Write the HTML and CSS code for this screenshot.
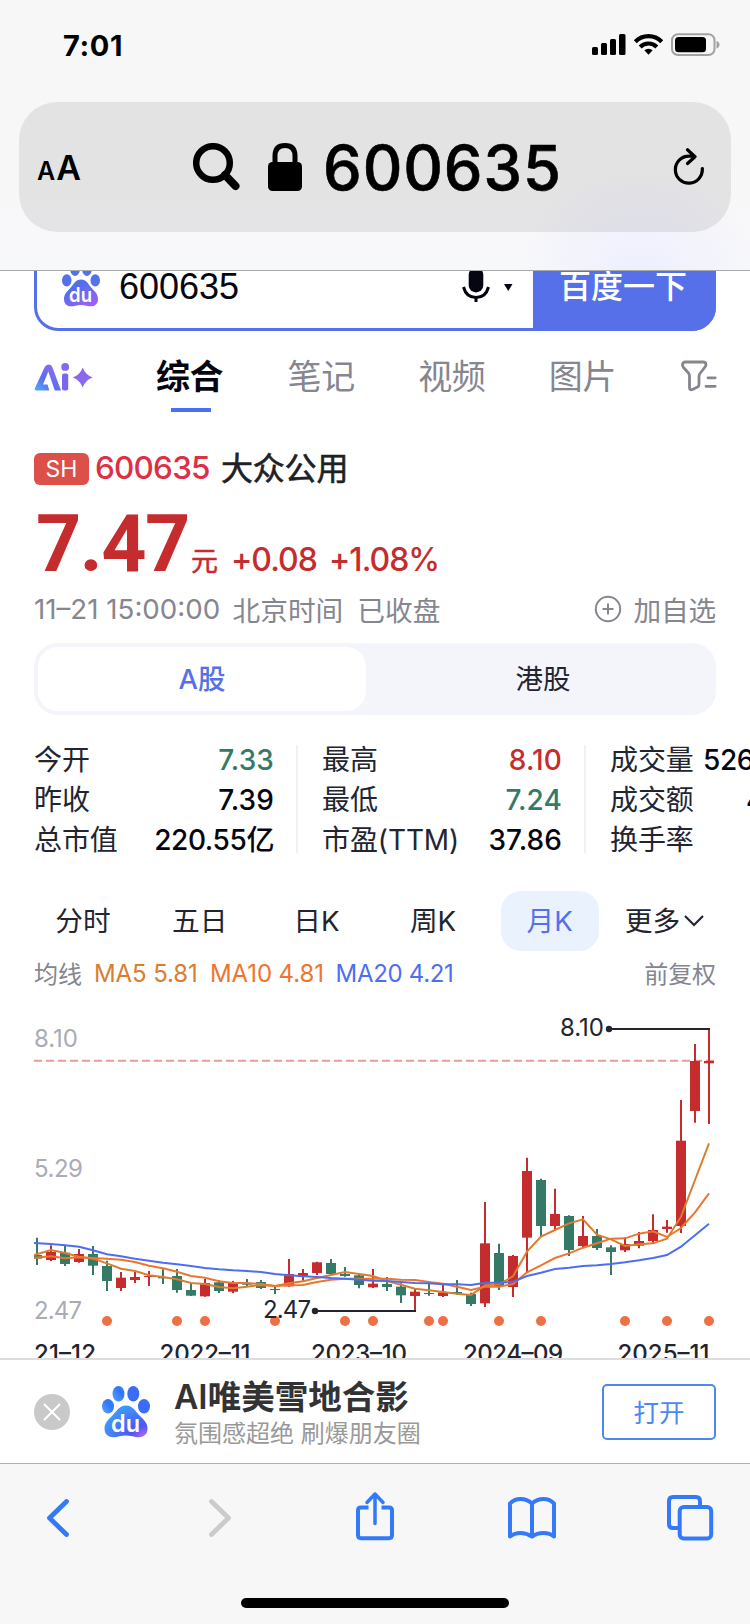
FILE: index.html
```
<!DOCTYPE html>
<html lang="zh-CN">
<head>
<meta charset="utf-8">
<title>600635</title>
<link rel="stylesheet" href="styles.css">
</head>
<body>
<div class="phone">
  <header class="browser-top">
    <div class="status">
      <span class="clock">7:01</span>
      <svg class="status-icons" width="128" height="24" viewBox="0 0 128 24">
        <rect x="0" y="14" width="6" height="8" rx="1.5"/><rect x="9" y="10" width="6" height="12" rx="1.5"/><rect x="18" y="6" width="6" height="16" rx="1.5"/><rect x="27" y="1" width="6.500" height="21" rx="1.5"/>
        <g fill="none" stroke="#000" stroke-width="4.200"><path d="M43.300 8.700a18.500 18.500 0 0 1 26.400 0"/><path d="M48.200 13.900a11.800 11.800 0 0 1 16.600 0"/></g>
        <path d="M52.300 17.300a6.300 6.300 0 0 1 8.400 0L56.500 21.700z"/>
        <rect x="80" y="1.200" width="42.500" height="20.800" rx="6" fill="none" stroke="#a2a2a2" stroke-width="2"/>
        <rect x="83" y="4" width="31" height="15.300" rx="3.500"/><path d="M124.500 8v7.500q3-1 3-3.750T124.500 8z" fill="#a2a2a2"/>
      </svg>
    </div>
    <div class="address">
      <span class="aa"><small>A</small>A</span>
      <div class="address-main">
        <svg width="47" height="48" viewBox="0 0 47 48"><circle cx="20" cy="20" r="16.800" fill="none" stroke="#000" stroke-width="6.500"/><path d="M32 32 42.500 43" stroke="#000" stroke-width="8" stroke-linecap="round"/></svg>
        <svg width="34" height="48" viewBox="0 0 34 48"><rect y="19" width="34" height="29" rx="4.500"/><path d="M7 21V13Q7 2.500 17 2.500T27 13v8" fill="none" stroke="#000" stroke-width="5"/></svg>
        <span>600635</span>
      </div>
      <svg class="reload" width="32" height="38" viewBox="0 0 32 38" fill="none" stroke="#000" stroke-width="3.200" stroke-linecap="round" stroke-linejoin="round"><path d="M29.300 20.500a13.500 13.500 0 1 1-13.300-12.300h5.500M14.500 1.800 22 8.700 14.500 15.500"/></svg>
    </div>
  </header>

  <main class="page">
    <div class="search">
      <svg class="paw" width="38" height="44" viewBox="0 0 48 52" preserveAspectRatio="none">
        <defs><linearGradient id="pw" x1="0" y1="0" x2=".7" y2="1"><stop offset=".35" stop-color="#526eea"/><stop offset="1" stop-color="#9a60f2"/></linearGradient></defs>
        <g fill="#5670ea"><ellipse cx="16.500" cy="7.700" rx="6" ry="7.700"/><ellipse cx="31.500" cy="7.700" rx="6" ry="7.700"/><ellipse cx="6" cy="20.500" rx="6" ry="7.300"/><ellipse cx="42" cy="20.500" rx="6" ry="7.300"/></g>
        <path fill="url(#pw)" d="M24 19.500c7 0 9.500 6 14 10.500 4 4 7.500 7 7.500 12.500 0 6-4 8.700-9 8.700-4 0-7.500-1.700-12.500-1.700S15.500 51.200 11.500 51.200c-5 0-9-2.700-9-8.700C2.500 37 6 34 10 30c4.500-4.500 7-10.500 14-10.500z"/>
        <text class="du" x="9" y="46" textLength="29" lengthAdjust="spacingAndGlyphs">du</text>
      </svg>
      <span class="query">600635</span>
      <svg class="mic" width="52" height="42" viewBox="0 0 52 42"><rect x="6.700" y="6.500" width="14.600" height="25" rx="7.300"/><path d="M1.500 26c1.800 6.800 6.500 10.500 12.500 10.500s10.700-3.700 12.500-10.500M14 37v4" fill="none" stroke="#060612" stroke-width="3"/><path d="M42 23h8.500L46.250 30z"/></svg>
      <span class="go">百度一下</span>
    </div>

    <nav class="tabs">
      <svg width="60" height="30" viewBox="0 0 60 30">
        <defs><linearGradient id="ai" x1="0" y1="1" x2="1" y2="0"><stop offset="0" stop-color="#51aef8"/><stop offset=".4" stop-color="#5a6cf0"/><stop offset="1" stop-color="#a46cf2"/></linearGradient></defs>
        <path fill="url(#ai)" d="M1 25 10.500 4.500Q12 1.500 14.500 1.500q3 0 4 3L27 27.500h-6.200L14.300 8.500 9 21.500h4.500l1.800 6H2.500Q0 27.500 1 25z"/>
        <rect x="28" y="10.500" width="6.200" height="17" rx="2" fill="#7a66ef"/><circle cx="31.200" cy="3.900" r="3.900" fill="#8569f0"/>
        <path fill="#8b69ef" d="M48.700 4.500q2.600 7.400 10 10-7.400 2.600-10 10-2.600-7.400-10-10 7.400-2.600 10-10z"/>
      </svg>
      <span class="tab tab-on">综合</span><span class="tab">笔记</span><span class="tab">视频</span><span class="tab">图片</span>
      <svg class="filter" width="36" height="32" viewBox="0 0 36 32" fill="none" stroke="#85868f" stroke-width="2.800" stroke-linejoin="round" stroke-linecap="round"><path d="M4.500 2H22q3 0 3 2.700 0 1-1 2.300l-5 6.500q-1 1.300-1 3v8q0 1.700-1.500 2.500l-5 2.500q-3 1-3-2V16q0-1.500-.8-2.700L2.500 7.500Q1.500 6 1.500 4.700 1.500 2 4.500 2z"/><path d="M27 17.800h7.200M25 26.300h9.200"/></svg>
    </nav>

    <div class="name"><span class="badge">SH</span><span class="code">600635</span><span class="company">大众公用</span></div>
    <div class="price"><b>7.47</b><span class="yuan">元</span><span class="delta">+0.08</span><span class="pct">+1.08%</span></div>
    <div class="time"><span class="ts">11–21 15:00:00</span><span>北京时间</span><span class="closed">已收盘</span>
      <svg width="28" height="28" viewBox="0 0 28 28" fill="none" stroke="#85868f" stroke-width="2"><circle cx="14" cy="14" r="12.200"/><path d="M8.500 14h11M14 8.500v11"/></svg><span class="add">加自选</span></div>

    <div class="market"><span class="market-on">A股</span><span>港股</span></div>

    <div class="stats">
      <dl><dt>今开</dt><dd class="down wide">7.33</dd><dt>昨收</dt><dd class="wide">7.39</dd><dt>总市值</dt><dd>220.55亿</dd></dl>
      <dl><dt>最高</dt><dd class="up wide">8.10</dd><dt>最低</dt><dd class="down wide">7.24</dd><dt>市盈(TTM)</dt><dd class="wide">37.86</dd></dl>
      <dl class="volume"><dt>成交量</dt><dd>526</dd><dt>成交额</dt><dd class="turnover">4</dd><dt>换手率</dt><dd></dd></dl>
    </div>

    <nav class="periods">
      <span>分时</span><span>五日</span><span>日K</span><span>周K</span><span class="period-on">月K</span>
      <span class="more">更多<svg width="20" height="14" viewBox="0 0 20 14" fill="none" stroke="#222530" stroke-width="2.200"><path d="M1 2l9 9 9-9"/></svg></span>
    </nav>

    <div class="ma"><span class="ma-label">均线</span><span class="ma5">MA5 5.81</span><span class="ma10">MA10 4.81</span><span class="ma20">MA20 4.21</span><span class="adjust">前复权</span></div>

    <svg class="chart" width="750" height="358" viewBox="0 0 750 358">
      <clipPath id="plot"><rect x="34" y="0" width="690" height="358"/></clipPath>
      <g id="candles" clip-path="url(#plot)"></g>
      <g class="scale"><text x="34" y="47" textLength="44">8.10</text><text x="34" y="177" textLength="49">5.29</text><text x="34" y="319" textLength="48">2.47</text></g>
      <g class="callout">
        <path d="M609 29H710M315 311H416"/><circle cx="609" cy="29" r="3.200"/><circle cx="315" cy="311" r="3.200"/>
        <text x="560" y="36" textLength="44">8.10</text><text x="263" y="318" textLength="48">2.47</text>
      </g>
      <g class="axis"><text x="34" y="362" textLength="62">21–12</text><text x="159.500" y="362" textLength="91">2022–11</text><text x="311" y="362" textLength="96">2023–10</text><text x="463" y="362" textLength="100">2024–09</text><text x="617.500" y="362" textLength="92">2025–11</text></g>
    </svg>
  </main>

  <aside class="promo">
    <svg width="36" height="36" viewBox="0 0 36 36"><circle cx="18" cy="18" r="18" fill="#c9c9c9"/><path d="M10.500 10.500l15 15M25.500 10.500l-15 15" stroke="#fff" stroke-width="2" stroke-linecap="round"/></svg>
    <svg class="promo-paw" width="48" height="52" viewBox="0 0 48 52">
      <defs><radialGradient id="bp" cx=".95" cy=".98" r="1"><stop offset="0" stop-color="#b768fa"/><stop offset=".35" stop-color="#4a58ee"/><stop offset="1" stop-color="#4095f8"/></radialGradient>
      <linearGradient id="toe" x1="0" y1="1" x2="1" y2="0"><stop offset="0" stop-color="#5aa5ff"/><stop offset=".6" stop-color="#3377fa"/></linearGradient></defs>
      <g fill="url(#toe)"><ellipse cx="16.500" cy="7.800" rx="6" ry="7.800"/><ellipse cx="6" cy="20.300" rx="6" ry="7.300"/></g><g fill="#3b6cf8"><ellipse cx="31.300" cy="7.800" rx="6" ry="7.800"/><ellipse cx="42" cy="20.300" rx="6" ry="7.300"/></g>
      <path fill="url(#bp)" d="M24 19.500c7 0 9.500 6 14 10.500 4 4 7.500 7 7.500 12.500 0 6-4 8.700-9 8.700-4 0-7.500-1.700-12.500-1.700S15.500 51.200 11.500 51.200c-5 0-9-2.700-9-8.700C2.500 37 6 34 10 30c4.500-4.500 7-10.500 14-10.500z"/>
      <text class="du" x="9" y="46" textLength="29" lengthAdjust="spacingAndGlyphs">du</text>
    </svg>
    <div class="promo-text"><strong>AI唯美雪地合影</strong><span>氛围感超绝 刷爆朋友圈</span></div>
    <span class="open">打开</span>
  </aside>

  <footer class="browser-bottom">
    <div class="tools">
      <svg width="24" height="42" viewBox="0 0 24 42" fill="none" stroke="#347af8" stroke-width="4.800" stroke-linecap="round" stroke-linejoin="round"><path d="M20.500 4.500 3.500 21 20.500 37.500"/></svg>
      <svg class="forward" width="24" height="42" viewBox="0 0 24 42" fill="none" stroke="#cbcbcc" stroke-width="4.800" stroke-linecap="round" stroke-linejoin="round"><path d="M3.500 4.500 20.500 21 3.500 37.500"/></svg>
      <svg class="share" width="40" height="52" viewBox="0 0 40 52" fill="none" stroke="#347af8" stroke-width="4"><path d="M13.500 17.500H6q-3 0-3 3V45q0 3.200 3 3.200H34q3 0 3-3.200V20.500q0-3-3-3h-7.500"/><path d="M20 33.500V4M12 12.500l8-8.500 8 8.500" stroke-width="3.500" stroke-linejoin="round" stroke-linecap="round"/></svg>
      <svg class="book" width="50" height="46" viewBox="0 0 50 46" fill="none" stroke="#347af8" stroke-width="4" stroke-linejoin="round"><path d="M25 8.500Q20 4 13.500 4 7 4 3 8.500V41.500Q7.500 38 13.500 38T25 41.500Q30 38 36.500 38T47 41.500V8.500Q43 4 36.500 4 30 4 25 8.500zV41"/></svg>
      <svg class="windows" width="48" height="48" viewBox="0 0 48 48" fill="none" stroke="#347af8" stroke-width="4"><path d="M12 34H7q-4 0-4-4V7q0-4 4-4H30q4 0 4 4v5"/><rect x="13.700" y="13" width="31.500" height="31.500" rx="4"/></svg>
    </div>
    <div class="home"></div>
  </footer>
</div>
<script src="chart.js"></script>
</body>
</html>
```
FILE: styles.css
```
* { box-sizing: border-box; }
body { margin: 0; background: #fff; font-family: Inter, "Noto Sans CJK SC", sans-serif; color: #222530; }
svg { display: block; flex: none; }
.phone { width: 750px; height: 1624px; display: flex; flex-direction: column; overflow: hidden; }

.browser-top { height: 271px; flex: none; background: radial-gradient(circle at 640px 285px, #eceefe 0, rgba(247,247,249,0) 120px), linear-gradient(#f7f7f7 60%, #f7f8fb); border-bottom: 1px solid #a9a9ad; padding: 0 19px; }
.status { height: 102px; display: flex; justify-content: space-between; padding: 33px 11px 0 44px; }
.clock { font-size: 29px; line-height: 25px; font-weight: 700; letter-spacing: .6px; color: #000; }
.address { height: 130px; border-radius: 38px; background: rgba(0,0,0,.078); display: flex; align-items: center; color: #000; padding: 0 26px 0 18px; }
.aa { font-size: 34px; font-weight: 600; width: 156px; line-height: 40px; margin-top: 5px; letter-spacing: -.5px; }
.aa small { font-size: 25px; letter-spacing: 1px; }
.address-main { display: flex; align-items: center; height: 130px; flex: 1; font-size: 61.500px; font-weight: 500; letter-spacing: .9px; -webkit-text-stroke: .6px #000; }
.address-main svg + svg { margin: 0 21px 0 28px; }
.reload { margin-top: 0; }

.page { height: 1087px; flex: none; overflow: hidden; }
.search { margin: -29px 34px 0; height: 89px; border: 3px solid #5670ea; border-radius: 24px; display: flex; align-items: center; color: #060612; }
.paw { margin: -4px 19px 0 25px; }
.du { font: 600 24px Inter, sans-serif; fill: #fff; }
.query { font: 36px "Liberation Sans", sans-serif; flex: 1; }
.mic { fill: #060612; margin: -9px 22px 0 0; }
.go { flex: none; align-self: stretch; margin: -3px; width: 183px; border-radius: 0 24px 24px 0; background: #5670ea; color: #fff; font-size: 32px; font-weight: 500; text-align: center; line-height: 90px; padding-right: 3px; }
.tabs { height: 98px; margin: 0 34px; display: flex; align-items: flex-start; padding-top: 32px; }
.tab { font-size: 34px; line-height: 48px; width: 67.600px; margin: -10px 0 0 63px; color: #85868f; white-space: nowrap; letter-spacing: -.4px; }
.tab-on { color: #060612; font-weight: 700; height: 60px; text-indent: -1px; background: linear-gradient(#4e6ef2,#4e6ef2) center 55px / 40px 4px no-repeat; }
.filter { margin: -3px -1px 0 auto; }

.name { height: 64px; margin: 0 34px; display: flex; align-items: center; padding-top: 15px; }
.badge { width: 55px; height: 32px; border-radius: 6px; background: #dc5049; color: #fff; font-size: 23px; line-height: 32px; text-align: center; }
.code { color: #dd3046; font-size: 31.500px; font-weight: 500; letter-spacing: -.8px; margin: -3px 0 0 6px; width: 126px; }
.company { font-size: 32px; margin-top: -5px; letter-spacing: -.2px; -webkit-text-stroke: .6px #1f1f24; color: #1f1f24; }
.price { height: 86px; margin: 1px 34px 0; display: flex; align-items: baseline; color: #c52c2e; white-space: nowrap; }
.price b { font: 700 79px/100px Roboto, sans-serif; padding-left: 2px; width: 157px; letter-spacing: -1.500px; }
.yuan { font-size: 27px; width: 40px; -webkit-text-stroke: .5px #c52c2e; }
.delta, .pct { font-size: 32px; font-weight: 500; letter-spacing: -1px; }
.delta { width: 98px; }
.time { height: 60px; margin: 0 34px; display: flex; align-items: center; color: #85868f; font-size: 27.700px; }
.time span { margin-top: -2px; }
.time svg { margin-top: -2px; }
.ts { width: 198.500px; white-space: nowrap; letter-spacing: 0; }
.time .closed { margin-left: 14px; flex: 1; }
.time .add { margin-left: 12px; letter-spacing: -.2px; }
.market { margin: 3px 34px 0; height: 72px; padding: 4px; border-radius: 24px; background: #f4f5fa; display: flex; font-size: 27.500px; line-height: 65px; text-align: center; }
.market span { flex: 1; padding-left: 8px; }
.market .market-on { flex: none; width: 328px; height: 64px; padding: 0; border-radius: 20px; background: #fff; color: #5670ea; font-weight: 500; }

.stats { display: flex; width: 940px; margin: 30px 0 0 34px; height: 108px; }
dl { flex: none; margin: 0 24px 0 0; width: 264px; padding: 1px 22px 0 0; border-right: 2px solid #f0f1f3; display: grid; grid-template-columns: auto auto; align-content: center; line-height: 40px; font-size: 28px; letter-spacing: -.4px; white-space: nowrap; }
dt { letter-spacing: -.1px; }
dd { margin: 0; text-align: right; font-weight: 500; color: #060612; }
.wide { letter-spacing: .1px; }
.volume { grid-template-columns: 93px auto; }
.volume dd { text-align: left; }
.volume .turnover { padding-left: 43px; }
.down { color: #347a66; }
.up { color: #c52c2e; }

.periods { height: 60px; margin: 38px 34px 0; display: flex; align-items: center; font-size: 27.700px; line-height: 59px; text-align: center; }
.periods span { flex: none; width: 98px; margin-right: 18.700px; white-space: nowrap; }
.periods .period-on { border-radius: 20px; background: #eaf2fd; color: #5670ea; line-height: 60px; }
.periods .more { display: flex; align-items: center; justify-content: center; gap: 4px; margin: 0; width: 94px; }
.ma { height: 49px; margin: 0 34px; display: flex; align-items: center; padding-bottom: 4px; font-size: 24px; letter-spacing: -.1px; color: #85868f; white-space: nowrap; }
.ma-label { width: 60px; }
.ma-label, .adjust { margin-top: -2px; }
.ma5 { color: #d97e31; width: 116px; }
.ma10 { color: #ee752f; width: 125.500px; }
.ma20 { color: #4e6ef2; flex: 1; letter-spacing: -.3px; }
.chart text { font-family: Inter, sans-serif; font-size: 24px; }
.scale { fill: #a9acb5; }
.callout text { fill: #222530; stroke: none; }
.callout { fill: #222530; stroke: #222530; stroke-width: 2; }
.callout circle { stroke: none; }
.axis { fill: #222530; font-weight: 500; }

.promo { height: 105px; flex: none; border-top: 2px solid #ddd; padding: 0 34px; display: flex; align-items: center; background: #fff; }
.promo-paw { margin: 0 24px 0 32px; }
.promo-text { flex: 1; display: flex; flex-direction: column; padding-top: 2px; }
.promo-text strong { font-size: 33.500px; line-height: 42px; font-weight: 600; color: #333; }
.promo-text span { font-size: 24px; line-height: 32px; color: #999; }
.open { width: 114px; height: 56px; border: 2px solid #4c88f5; border-radius: 5px; color: #4c88f5; font-size: 25.500px; line-height: 54px; text-align: center; }
.browser-bottom { flex: 1; background: #f7f7f8; border-top: 1px solid #b0b0b0; }
.tools { height: 134px; padding: 33px 34px 0 46px; display: flex; }
.forward { margin-left: 138px; }
.share { margin: -7px 0 0 123px; }
.book { margin: -2px 0 0 112px; }
.windows { margin: -3px 0 0 109px; }
.home { width: 268px; height: 10px; border-radius: 5px; background: #000; margin: 0 auto; }
```
FILE: chart.js
```
// Monthly candles: [direction, high, low, body top, body bottom], in thirds of a pixel.
const candles = [
["g",713,795,765,776],["r",736,783,756,780],["g",738,798,758,792],["r",747,788,762,786],["g",738,825,762,797],["g",782,873,798,843],["r",816,873,833,864],["r",815,849,831,840],["r",813,858,828,831],["g",808,852,831,835],["g",807,878,828,870],["g",848,888,870,887],["r",837,890,849,889],["g",840,879,847,873],["r",843,879,846,875],["g",837,860,850,854],["g",840,867,846,864],["g",855,882,867,870],["r",777,860,822,859],["r",807,842,819,831],["r",785,825,787,819],["g",777,824,789,822],["g",801,830,822,828],["g",820,865,826,855],["r",807,864,851,862],["g",831,873,852,861],["g",850,909,860,886],["r",867,933,875,888],["g",846,887,879,882],["r",850,891,877,888],["g",840,885,876,880],["g",878,918,882,912],["r",606,921,730,910],["g",731,870,759,858],["r",765,891,768,861],["r",473,820,513,713],["g",536,708,540,678],["r",566,690,642,678],["g",646,768,648,750],["r",648,744,708,738],["g",687,750,708,744],["g",736,825,742,756],["r",712,756,732,751],["r",696,745,723,737],["r",643,729,690,723],["r",660,698,680,687],["r",300,699,422,678],["r",132,368,183,333],["r",87,372,183,190]];
const averages = [
["#d97e31",[765,750,759,770,776,790,806,813,826,831,838,849,852,861,865,860,855,858,850,844,834,825,816,822,828,843,854,866,871,876,881,885,856,853,829,755,710,690,670,658,704,718,738,733,730,716,650,540,430]],
["#ee752f",[773,769,775,772,774,776,779,786,797,805,815,828,833,844,849,849,852,858,856,855,846,839,836,836,836,836,839,840,846,851,860,870,860,860,852,817,796,774,760,743,730,716,715,701,694,711,684,637,580]],
["#4e6ef2",[729,732,736,740,751,763,769,776,782,788,793,798,804,808,811,813,816,822,826,829,831,834,836,839,842,843,846,849,850,853,853,855,848,848,845,828,818,807,803,798,796,792,787,781,774,765,740,706,671]]];
const events = [5,10,12,17,22,24,28,29,33,36,42,45,48];
const x = i => 37 + 14 * i;
const color = { r: "#c52c2e", g: "#347a66" };
let out = '<path d="M34 60.700H716" stroke="#eb9a99" stroke-width="2" stroke-dasharray="8 4"/>';
candles.forEach(([c, h, l, t, b], i) => {
  out += `<path d="M${x(i)} ${h / 3}V${l / 3}" stroke="${color[c]}" stroke-width="2"/><rect x="${x(i) - 5}" y="${t / 3}" width="10" height="${(b - t) / 3}" fill="${color[c]}"/>`;
});
for (const [stroke, ys] of averages) {
  const pts = ys.map((y, i) => `${i ? x(i) : 34},${(y / 3).toFixed(2)}`).join(" ");
  out += `<polyline points="${pts}" fill="none" stroke="${stroke}" stroke-width="2"/>`;
}
for (const i of events) out += `<circle cx="${x(i)}" cy="321" r="5" fill="#ee7044"/>`;
document.getElementById("candles").innerHTML = out;
```
